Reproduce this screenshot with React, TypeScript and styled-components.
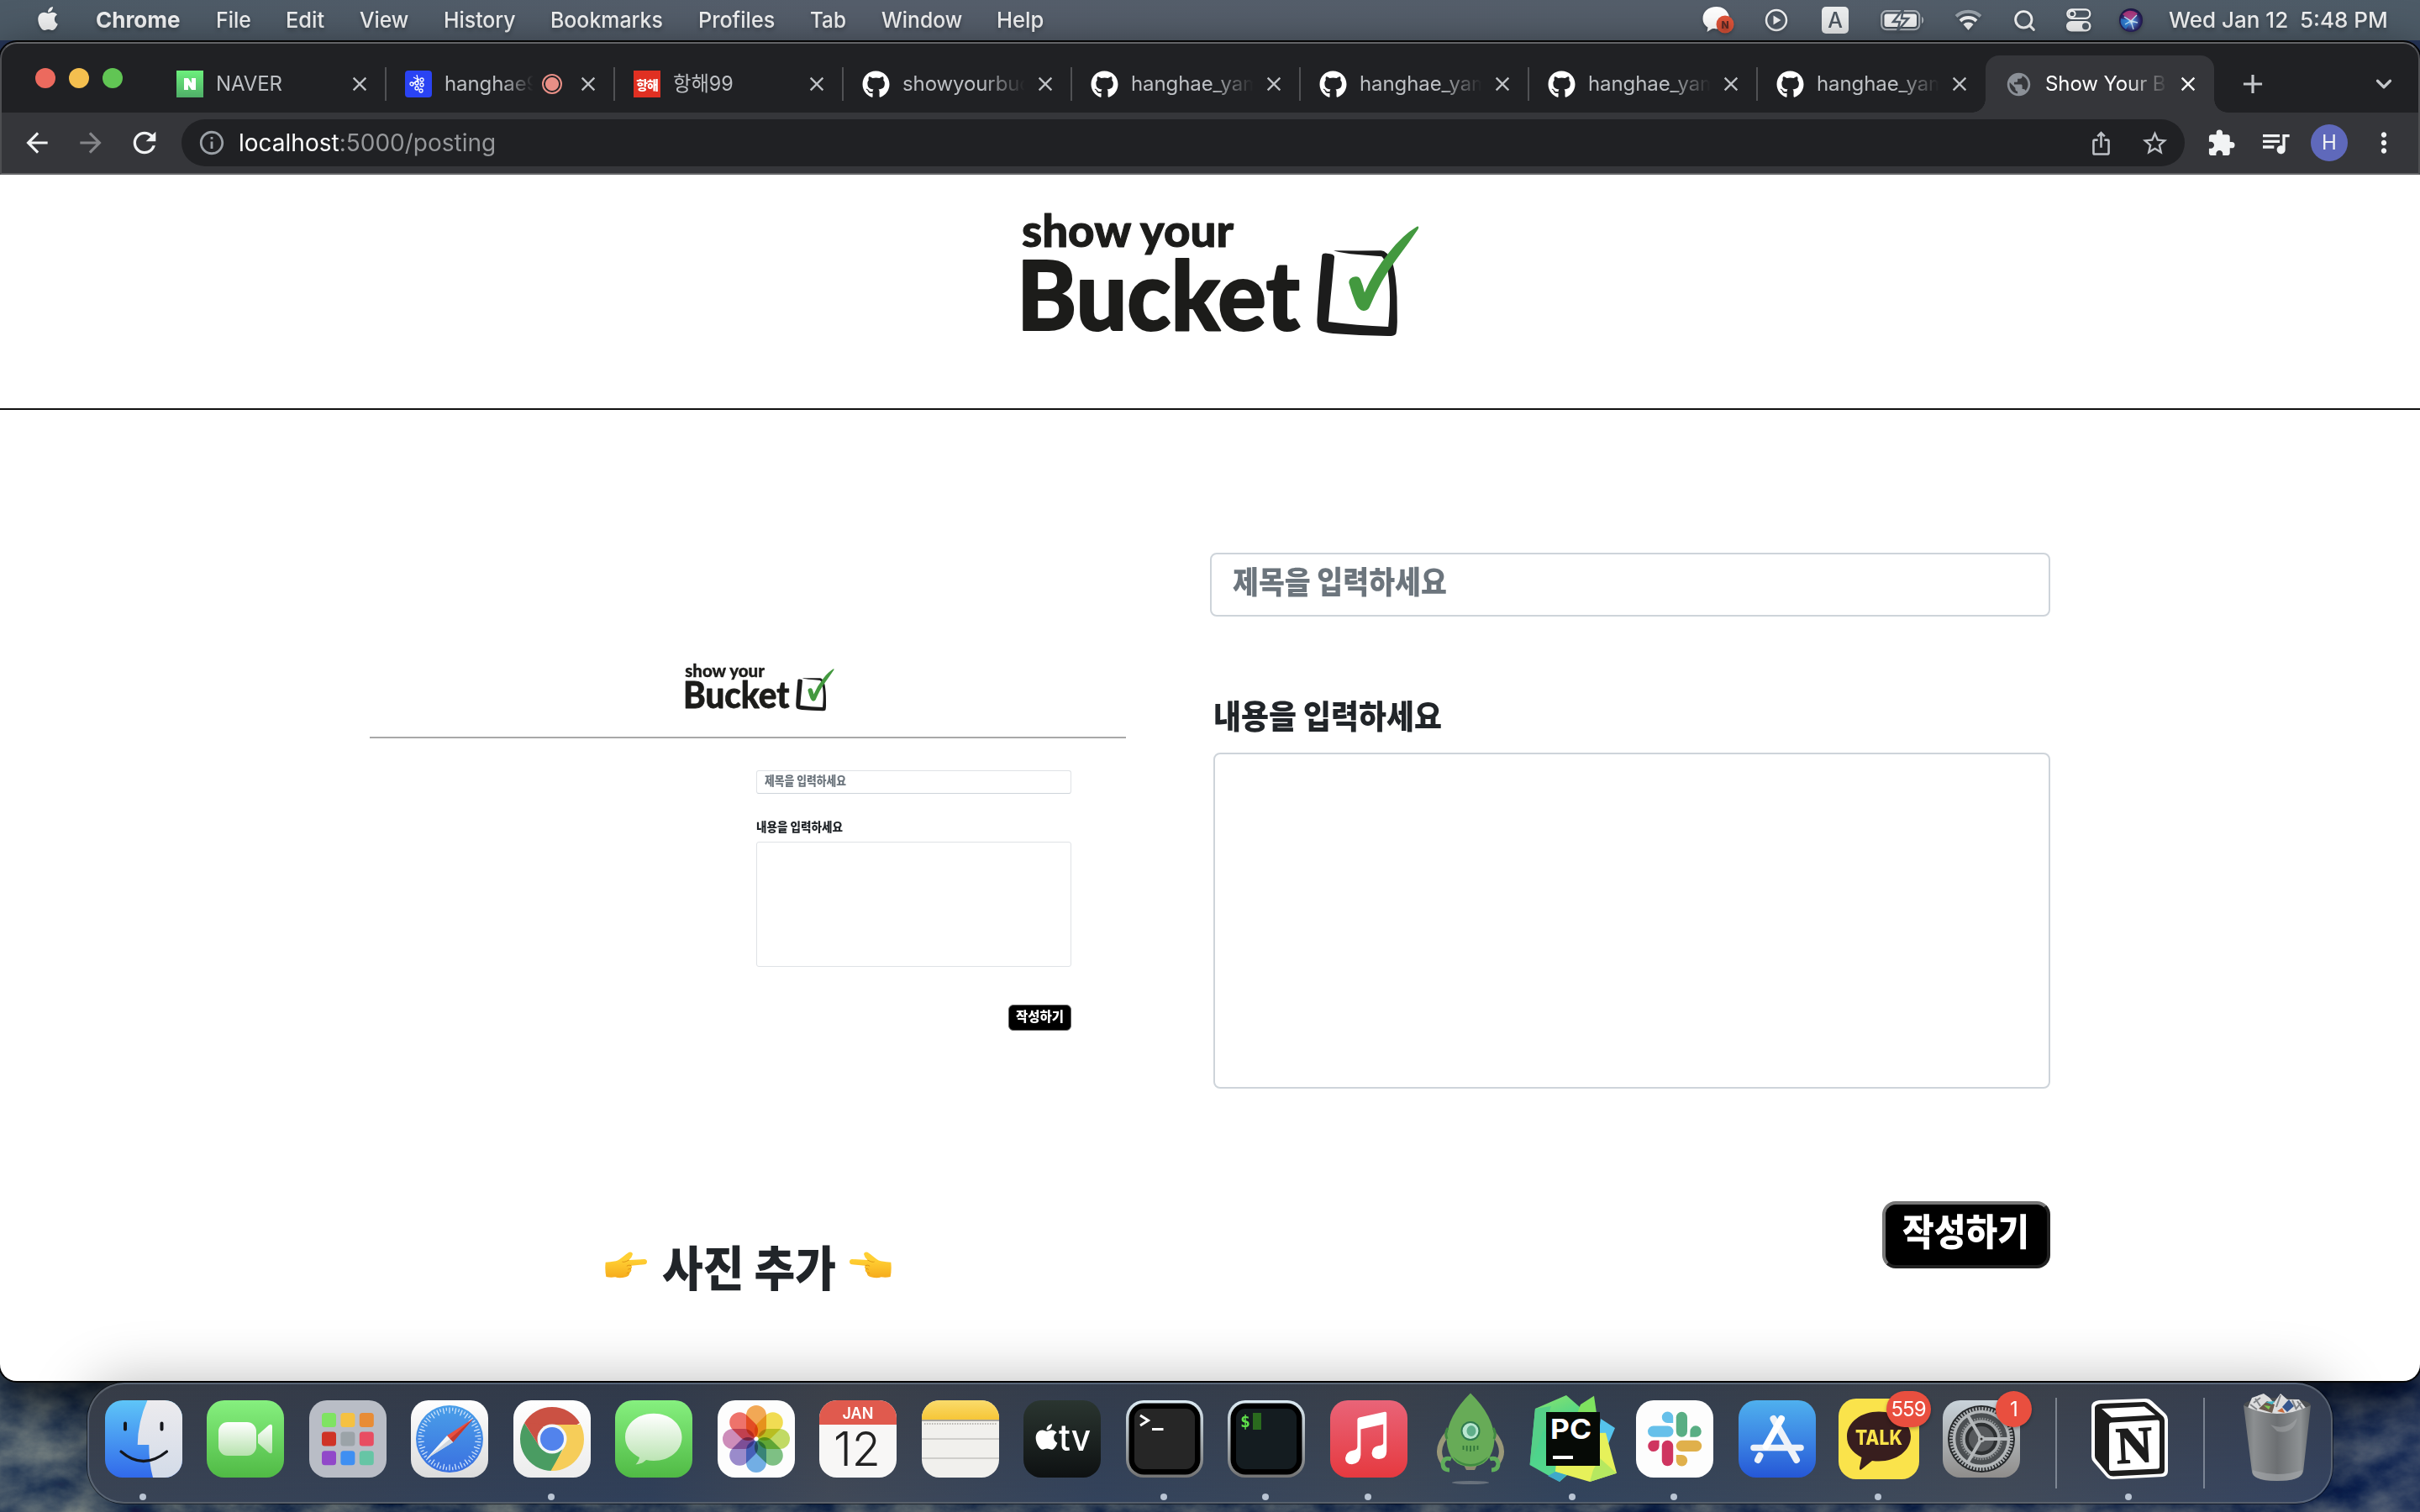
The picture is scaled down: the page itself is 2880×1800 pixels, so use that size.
import React, { useLayoutEffect, useRef, useState } from "react";
import styled, { createGlobalStyle, css } from "styled-components";
import { FaApple, FaGithub } from "react-icons/fa";
import {
  MdAdd,
  MdArrowBack,
  MdArrowForward,
  MdClose,
  MdExtension,
  MdIosShare,
  MdMoreVert,
  MdOutlineInfo,
  MdPublic,
  MdQueueMusic,
  MdRefresh,
  MdStarBorder,
} from "react-icons/md";
import { ChevronDown, Search } from "lucide-react";

const ui = `Inter, Roboto, "Noto Sans CJK KR", sans-serif`;
const korean = `"Noto Sans CJK KR", sans-serif`;

const GlobalStyle = createGlobalStyle`
  * { box-sizing: border-box; }
  body { margin: 0; background: #26365a; overflow: hidden; }
  svg { display: block; flex: none; }
`;

/* ---------- text squeezed or stretched to a set width ---------- */

const FitBox = styled.span<{ $w: number }>`
  display: block;
  flex: none;
  width: ${(p) => p.$w}px;
  white-space: pre;
`;
const FitInner = styled.span`
  display: inline-block;
  transform-origin: 0 50%;
`;

function Fit({ w, children }: { w: number; children: React.ReactNode }) {
  const ref = useRef<HTMLSpanElement>(null);
  const [scale, setScale] = useState(1);
  useLayoutEffect(() => {
    if (ref.current) setScale(w / ref.current.offsetWidth);
  }, [w]);
  return (
    <FitBox $w={w}>
      <FitInner ref={ref} style={{ transform: `scaleX(${scale})` }}>
        {children}
      </FitInner>
    </FitBox>
  );
}

/* ---------- desktop ---------- */

const Desktop = styled.div`
  position: relative;
  width: 2880px;
  height: 1800px;
  overflow: hidden;
  display: flex;
  flex-direction: column;
  font-family: ${ui};
  background: #26365a;
`;
const WallpaperLayer = styled.div`
  position: absolute;
  inset: 0;
`;

function Wallpaper() {
  return (
    <WallpaperLayer>
      <svg width="2880" height="1800">
        <defs>
          <filter id="terrain" x="0" y="0" width="100%" height="100%" colorInterpolationFilters="sRGB">
            <feTurbulence type="fractalNoise" baseFrequency="0.016 0.024" numOctaves="5" seed="11" />
            <feColorMatrix values="0.85 0 0 0 -0.2  0.75 0 0 0 -0.08  0.45 0 0 0 0.16  0 0 0 0 1" />
          </filter>
          <linearGradient id="land" x1="0" x2="1">
            <stop offset="0" stopColor="#5c6a70" stopOpacity="0.4" />
            <stop offset="0.12" stopColor="#5c6a70" stopOpacity="0.1" />
            <stop offset="0.9" stopColor="#1b2b5c" stopOpacity="0.3" />
            <stop offset="1" stopColor="#1b2b5c" stopOpacity="0.45" />
          </linearGradient>
        </defs>
        <rect y="1600" width="2880" height="200" filter="url(#terrain)" />
        <rect y="1600" width="2880" height="200" fill="url(#land)" />
      </svg>
    </WallpaperLayer>
  );
}

/* ---------- menu bar ---------- */

const MenuBar = styled.header`
  position: relative;
  height: 48px;
  flex: none;
  display: flex;
  align-items: center;
  padding: 0 38px 0 41px;
  color: #f1f2f3;
  font-size: 26px;
  font-weight: 500;
  line-height: 48px;
  text-shadow: 0 3px 5px rgba(0, 0, 0, 0.3);
  background: linear-gradient(90deg, #4c5a66, #555e6b 35%, #545e6a 70%, #4d5b67);
  svg { filter: drop-shadow(0 2px 2px rgba(0, 0, 0, 0.25)); }
`;
const AppleSlot = styled.div`
  width: 73px;
  padding-bottom: 4px;
`;
const Menus = styled.nav`
  display: flex;
  gap: 41.700px;
  flex: 1;
  & > :first-child { font-weight: 700; }
`;
const StatusItem = styled.div<{ $w: number }>`
  width: ${(p) => p.$w}px;
  flex: none;
  display: flex;
  justify-content: center;
`;
const InputSource = styled.span`
  width: 32px;
  height: 32px;
  border-radius: 5px;
  background: #eceeef;
  color: #4d5761;
  text-align: center;
  font-size: 25px;
  line-height: 32px;
  text-shadow: none;
`;

const menus: [string, number][] = [
  ["Chrome", 101],
  ["File", 42],
  ["Edit", 46],
  ["View", 58],
  ["History", 86],
  ["Bookmarks", 134],
  ["Profiles", 91],
  ["Tab", 43],
  ["Window", 96],
  ["Help", 56],
];

function SystemBar() {
  return (
    <MenuBar>
      <AppleSlot>
        <FaApple size={32} />
      </AppleSlot>
      <Menus>
        {menus.map(([m, w]) => (
          <Fit key={m} w={w}>{m}</Fit>
        ))}
      </Menus>
      <StatusItem $w={70}>
        <svg width="40" height="34" viewBox="0 0 40 34">
          <path d="M18 1C8 1 1.500 7 1.500 15c0 5 2.500 8.500 6 10.500L6.500 31l6.500-4c2 .6 14 1 16-3 3-4 5-9 3-14C29.500 4 24 1 18 1z" fill="#fff" />
          <circle cx="28" cy="22" r="10.500" fill="#e0543a" />
          <text x="28" y="26.500" fontSize="12" fontWeight="800" textAnchor="middle" fill="#5a2a25">N</text>
        </svg>
      </StatusItem>
      <StatusItem $w={68}>
        <svg width="28" height="28" viewBox="0 0 28 28">
          <circle cx="14" cy="14" r="12" fill="none" stroke="#f1f2f3" strokeWidth="2.500" />
          <path d="M10.500 8.500v11l9-5.500z" fill="#f1f2f3" />
        </svg>
      </StatusItem>
      <StatusItem $w={72}>
        <InputSource>A</InputSource>
      </StatusItem>
      <StatusItem $w={88}>
        <svg width="52" height="28" viewBox="0 0 52 28">
          <rect x="1.200" y="3.200" width="45" height="22" rx="6" fill="none" stroke="#aab1b8" strokeWidth="2.200" />
          <path d="M49 10c3 1 3 7 0 8z" fill="#aab1b8" />
          <rect x="4.500" y="6.500" width="38.500" height="15.500" rx="3" fill="#f1f2f3" />
          <path d="M27 1L15 16h8l-3 11 13-15h-8z" fill="#f1f2f3" stroke="#505c68" strokeWidth="2.500" />
        </svg>
      </StatusItem>
      <StatusItem $w={68}>
        <svg width="33" height="26" viewBox="0 0 33 26">
          <path d="M2 8.500a21 21 0 0 1 29 0" fill="none" stroke="#98a1a9" strokeWidth="4" />
          <path d="M7 14a13.500 13.500 0 0 1 19 0" fill="none" stroke="#f1f2f3" strokeWidth="4" />
          <path d="M10.500 18a8.500 8.500 0 0 1 12 0l-6 7z" fill="#f1f2f3" />
        </svg>
      </StatusItem>
      <StatusItem $w={66}>
        <Search size={29} strokeWidth={2.4} />
      </StatusItem>
      <StatusItem $w={64}>
        <svg width="30" height="28" viewBox="0 0 30 28">
          <rect x="1.300" y="1.300" width="27" height="10.500" rx="5.200" fill="none" stroke="#f1f2f3" strokeWidth="2.200" />
          <circle cx="7" cy="6.500" r="3.600" fill="none" stroke="#f1f2f3" strokeWidth="2" />
          <rect x="0" y="15" width="29.500" height="12.500" rx="6.200" fill="#f1f2f3" />
          <circle cx="23" cy="21.200" r="4" fill="#505c68" />
        </svg>
      </StatusItem>
      <StatusItem $w={60}>
        <svg width="28" height="28" viewBox="0 0 28 28">
          <defs>
            <radialGradient id="siri" cx="0.500" cy="0.550" r="0.600">
              <stop offset="0" stopColor="#e8f6ff" />
              <stop offset="0.250" stopColor="#4a7fd0" />
              <stop offset="0.700" stopColor="#2a2060" />
              <stop offset="1" stopColor="#141230" />
            </radialGradient>
          </defs>
          <circle cx="14" cy="14" r="14" fill="url(#siri)" />
          <path d="M14 15L4 7Q12-1 22 6z" fill="#c43a7d" opacity="0.800" />
          <path d="M14 15L2 12Q0 20 8 25z" fill="#2b8fe6" opacity="0.700" />
          <path d="M6 10l8 5 7-7M14 15l3 10M14 15l-7 4M14 15l8 2" stroke="#d9f5ff" strokeWidth="1.300" fill="none" opacity="0.900" />
        </svg>
      </StatusItem>
      <StatusItem $w={15} />
      <Fit w={261}>{"Wed Jan 12  5:48 PM"}</Fit>
    </MenuBar>
  );
}

/* ---------- browser window ---------- */

const BrowserWindow = styled.section`
  position: relative;
  height: 1594px;
  flex: none;
  border-radius: 20px;
  background: #202124;
  overflow: hidden;
  display: flex;
  flex-direction: column;
`;
const WindowShadow = styled.div`
  position: relative;
  margin-top: 2px;
  border-radius: 20px;
  box-shadow: 0 0 0 2px #060606, 0 20px 60px rgba(0, 0, 0, 0.8);
`;
const BrowserTop = styled.div`
  position: relative;
  flex: none;
  height: 158px;
  &::after {
    content: "";
    position: absolute;
    inset: 0;
    pointer-events: none;
    border: 2px solid #626366;
    border-left-color: #4d4e51;
    border-right-color: #4d4e51;
    border-radius: 20px 20px 0 0;
  }
`;
const TabStrip = styled.div`
  height: 84px;
  display: flex;
  align-items: flex-end;
`;
const Lights = styled.div`
  width: 187px;
  height: 82px;
  padding-left: 42px;
  display: flex;
  align-items: center;
  gap: 16px;
`;
const Light = styled.span<{ $c: string }>`
  width: 24px;
  height: 24px;
  border-radius: 50%;
  background: ${(p) => p.$c};
`;
const TabBox = styled.div<{ $active?: boolean; $line?: boolean }>`
  position: relative;
  width: 272px;
  height: 68px;
  padding: 0 17px 0 23px;
  display: flex;
  align-items: center;
  font-size: 24px;
  color: #bdc0c4;
  ${(p) =>
    p.$line &&
    css`
      &::after {
        content: "";
        position: absolute;
        right: -1px;
        top: 14px;
        width: 2px;
        height: 40px;
        background: #505154;
      }
    `}
  ${(p) =>
    p.$active &&
    css`
      background: #35363a;
      color: #fff;
      border-radius: 16px 16px 0 0;
      &::before, &::after {
        content: "";
        position: absolute;
        bottom: 0;
        width: 16px;
        height: 16px;
      }
      &::before {
        left: -16px;
        background: radial-gradient(circle at 0 0, transparent 15.500px, #35363a 16px);
      }
      &::after {
        right: -16px;
        background: radial-gradient(circle at 100% 0, transparent 15.500px, #35363a 16px);
      }
    `}
`;
const Favicon = styled.span<{ $bg?: string; $r?: number }>`
  width: 32px;
  height: 32px;
  flex: none;
  border-radius: ${(p) => p.$r ?? 0}px;
  background: ${(p) => p.$bg ?? "transparent"};
  color: #fff;
  display: flex;
  align-items: center;
  justify-content: center;
  font-size: 15px;
  font-weight: 900;
  letter-spacing: -1px;
`;
const TabTitle = styled.span<{ $fade?: boolean }>`
  flex: 1;
  min-width: 0;
  margin: 0 10px 0 15px;
  height: 36px;
  line-height: 36px;
  overflow: hidden;
  white-space: nowrap;
  letter-spacing: -0.1px;
  ${(p) => p.$fade && css`mask-image: linear-gradient(90deg, #000 65%, transparent 100%);`}
`;
const Recording = styled.span`
  width: 24px;
  height: 24px;
  flex: none;
  margin-right: 17px;
  border-radius: 50%;
  border: 2px solid #e88f86;
  background: radial-gradient(circle, #e88f86 7.500px, #202124 8.500px);
`;
const StripButton = styled.span<{ $ml: number }>`
  margin-left: ${(p) => p.$ml}px;
  height: 68px;
  display: flex;
  align-items: center;
  color: #c4c7cb;
`;

const gh = <FaGithub size={33} color="#fff" />;
const tabs: { icon: React.ReactNode; title: React.ReactNode; rec?: boolean; fade?: boolean }[] = [
  { icon: <Favicon $bg="linear-gradient(#6cf07c,#4fae68)"><svg width="16" height="16" viewBox="0 0 16 16"><path d="M1 1h5l4 6V1h5v14h-5L6 9v6H1z" fill="#fff" /></svg></Favicon>, title: <Fit w={79}>NAVER</Fit> },
  {
    icon: (
      <Favicon $bg="#2a43f3" $r={4}>
        <svg width="22" height="22" viewBox="0 0 22 22" fill="none" stroke="#fff" strokeWidth="1.300">
          <path d="M5 3l6 3M9 0l2 9M12 5l-8 6" />
          <circle cx="3" cy="11" r="2" /><circle cx="9" cy="10" r="2" /><circle cx="9" cy="16" r="2" />
          <circle cx="15" cy="6" r="2" /><circle cx="15" cy="12" r="2" /><circle cx="14" cy="19" r="2" />
        </svg>
      </Favicon>
    ),
    title: "hanghae99",
    rec: true,
    fade: true,
  },
  { icon: <Favicon $bg="#e03022">항해</Favicon>, title: <Fit w={72}>항해99</Fit> },
  { icon: gh, title: "showyourbucket", fade: true },
  { icon: gh, title: "hanghae_yamm", fade: true },
  { icon: gh, title: "hanghae_yamm", fade: true },
  { icon: gh, title: "hanghae_yamm", fade: true },
  { icon: gh, title: "hanghae_yamm", fade: true },
];

const Toolbar = styled.div`
  height: 74px;
  padding-left: 12px;
  background: #35363a;
  border-bottom: 2px solid #5c5d61;
  display: flex;
  align-items: center;
  color: #f1f3f4;
`;
const NavButton = styled.span<{ $w: number; $dim?: boolean }>`
  width: ${(p) => p.$w}px;
  flex: none;
  display: flex;
  justify-content: center;
  color: ${(p) => (p.$dim ? "#85868a" : "inherit")};
`;
const Omnibox = styled.div`
  width: 2384px;
  height: 56px;
  flex: none;
  margin-left: 12px;
  border-radius: 28px;
  background: #202124;
  display: flex;
  align-items: center;
  font-size: 28px;
  color: #9aa0a6;
  padding-left: 19px;
`;
const Address = styled.div`
  flex: 1;
  padding-left: 15px;
  color: #96989b;
  b { font-weight: 400; color: #fff; }
`;
const Avatar = styled.span`
  width: 44px;
  height: 44px;
  border-radius: 50%;
  background: #5f69bb;
  text-align: center;
  font-size: 24px;
  line-height: 44px;
`;

/* ---------- logo ---------- */

function Logo({ width, height }: { width: number; height: number }) {
  return (
    <svg width={width} height={height} viewBox="30 20 490 170" preserveAspectRatio="none">
      <g fill="#1c1c1a" stroke="#1c1c1a" strokeLinejoin="round" fontFamily="Lato, 'Noto Sans', sans-serif">
        <text x="36" y="74" fontSize="53" fontWeight="900" strokeWidth="1" textLength="252" lengthAdjust="spacingAndGlyphs">show your</text>
        <text x="30" y="173" fontSize="114" fontWeight="900" strokeWidth="2" textLength="337" lengthAdjust="spacingAndGlyphs">Bucket</text>
      </g>
      <g transform="scale(0.34439 0.33333)">
        <path
          d="M1142 252Q1144 243 1160 245Q1184 247 1185 257Q1178 340 1172 400L1164 489Q1260 502 1371 507Q1378 430 1376 380Q1374 330 1366 290Q1356 262 1348 256Q1290 252 1240 247Q1190 240 1182 235Q1270 236 1346 235Q1366 235 1385 275Q1398 320 1401 400L1402 490Q1401 525 1397 533Q1390 541 1370 540Q1270 538 1180 531Q1145 527 1133 518Q1124 506 1125 480Q1130 380 1142 252Z"
          fill="#1c1c1c"
        />
        <path
          d="M1235 350Q1234 337 1248 330Q1268 323 1275 338Q1284 360 1289 385Q1320 310 1375 240Q1420 180 1470 149Q1479 146 1474 158Q1440 210 1400 265Q1345 340 1306 437Q1299 450 1285 450Q1268 447 1259 425Q1244 385 1235 350Z"
          fill="#43993f"
        />
      </g>
    </svg>
  );
}

/* ---------- page ---------- */

const Page = styled.main`
  flex: 1;
  background: #fff;
  font-family: ${korean};
  font-weight: 900;
  color: #212529;
`;
const PageHeader = styled.div`
  height: 280px;
  padding: 32px 0 0 1210px;
  border-bottom: 2px solid #111;
`;
const Columns = styled.div`
  display: grid;
  grid-template-columns: 900px 1000px;
  column-gap: 100px;
  padding-left: 440px;
`;
const PhotoColumn = styled.div`
  padding-top: 272px;
`;
const Preview = styled.div`
  height: 701px;
  color: #212529;
`;
const PreviewHeader = styled.div`
  height: 119px;
  padding: 25px 0 0 373px;
  border-bottom: 2px solid #a8a8a8;
`;
const PreviewForm = styled.div`
  width: 375px;
  margin: 38px 0 0 460px;
  font-size: 14.500px;
  line-height: 20px;
`;
const PreviewInput = styled.div`
  height: 28px;
  border: 1px solid #dfe2e6;
  border-bottom-color: #ced4da;
  border-radius: 3px;
  color: #6c757d;
  padding: 1px 0 0 9px;
`;
const PreviewLabel = styled.div`
  height: 56px;
  padding-top: 29px;
  margin-bottom: 1px;
`;
const PreviewArea = styled.div`
  height: 149px;
  border: 1px solid #dfe2e6;
  border-radius: 3px;
`;
const PreviewButton = styled.div`
  width: 75px;
  height: 31px;
  margin: 45px 0 0 auto;
  background: #000;
  border: 1px solid #666;
  border-radius: 6px;
  color: #fff;
  font-size: 16px;
  padding: 2px 0 0 8px;
`;
const Caption = styled.div`
  height: 90px;
  display: flex;
  align-items: center;
  padding-left: 280px;
  font-size: 57px;
  line-height: 84px;
`;
const CaptionText = styled.div`
  margin: 0 16px 0 18px;
`;
const FormColumn = styled.div`
  padding-top: 170px;
  display: flex;
  flex-direction: column;
`;
const TitleInput = styled.div`
  height: 76px;
  border: 2px solid #ced4da;
  border-radius: 8px;
  padding: 1px 0 0 25px;
  font-size: 37px;
  line-height: 60px;
  color: #6c757d;
`;
const Label = styled.label`
  height: 162px;
  padding: 86px 0 0 4px;
  font-size: 39px;
  line-height: 60px;
`;
const ContentArea = styled.div`
  height: 400px;
  margin-left: 4px;
  border: 2px solid #ced4da;
  border-radius: 8px;
`;
const SubmitButton = styled.button`
  width: 200px;
  height: 80px;
  margin: 134px 0 0 auto;
  padding: 0 0 13px 20px;
  display: flex;
  align-items: center;
  background: #000;
  color: #fff;
  border: 4px solid;
  border-color: #767676 #212121 #212121 #767676;
  border-radius: 16px;
  font: 900 44px/60px ${korean};
`;

function PointingHand({ flip }: { flip?: boolean }) {
  return (
    <svg width="50" height="32" viewBox="0 0 147 96" preserveAspectRatio="none">
      <defs>
        <linearGradient id="skin" x1="0" y1="0" x2="0" y2="1">
          <stop offset="0.300" stopColor="#ffcf33" />
          <stop offset="1" stopColor="#f6ab1c" />
        </linearGradient>
      </defs>
      <g transform={flip ? "matrix(-1 0 0 1 147 0)" : undefined}>
        <path d="M2 38C12 38 24 36 38 34C56 28 70 10 84 2Q96-1 97 9Q95 20 84 30L138 27Q147 28 147 36Q147 45 138 46L92 50Q97 56 91 62Q95 70 86 76Q86 88 72 91Q50 97 36 91Q20 94 4 90Q-1 64 2 38Z" fill="url(#skin)" />
        <path d="M84 30Q66 40 60 36M92 50Q82 46 76 52M91 62Q84 60 80 64M86 76Q80 74 76 78" fill="none" stroke="#d98a10" strokeWidth="2.500" />
      </g>
    </svg>
  );
}

function PostingPage() {
  return (
    <Page>
      <PageHeader>
        <Logo width={490} height={170} />
      </PageHeader>
      <Columns>
        <PhotoColumn>
          <Preview>
            <PreviewHeader>
              <Logo width={184} height={65} />
            </PreviewHeader>
            <PreviewForm>
              <PreviewInput><Fit w={97}>제목을 입력하세요</Fit></PreviewInput>
              <PreviewLabel><Fit w={103}>내용을 입력하세요</Fit></PreviewLabel>
              <PreviewArea />
              <PreviewButton><Fit w={57}>작성하기</Fit></PreviewButton>
            </PreviewForm>
          </Preview>
          <Caption>
            <PointingHand />
            <CaptionText><Fit w={207}>사진 추가</Fit></CaptionText>
            <PointingHand flip />
          </Caption>
        </PhotoColumn>
        <FormColumn>
          <TitleInput><Fit w={255}>제목을 입력하세요</Fit></TitleInput>
          <Label><Fit w={272}>내용을 입력하세요</Fit></Label>
          <ContentArea />
          <SubmitButton><Fit w={151}>작성하기</Fit></SubmitButton>
        </FormColumn>
      </Columns>
    </Page>
  );
}

/* ---------- dock ---------- */

const DockArea = styled.footer`
  position: relative;
  flex: none;
  height: 154px;
  padding: 0 104px;
  margin-top: 2px;
`;
const DockBar = styled.div`
  height: 144px;
  border-radius: 44px;
  border: 2px solid rgba(160, 170, 180, 0.32);
  padding: 0 4px;
  display: flex;
  background: linear-gradient(180deg, rgba(50, 52, 58, 0.5), rgba(50, 66, 92, 0.2)),
    linear-gradient(90deg, #3b4453, #2f3f59 25%, #444b57 33%, #33435c 45%, #3f4a59 58%, #32445d 66%, #454d59 85%, #354462);
  box-shadow: 0 0 0 1px rgba(0, 0, 0, 0.5), 0 0 70px rgba(0, 0, 0, 0.28);
`;
const Slot = styled.div<{ $w?: number }>`
  position: relative;
  width: ${(p) => p.$w ?? 121.500}px;
  flex: none;
  display: flex;
  justify-content: center;
  margin-top: -2px;
  svg { overflow: visible; }
`;
const Dot = styled.i`
  position: absolute;
  top: 132px;
  left: calc(50% - 5px);
  width: 8px;
  height: 8px;
  border-radius: 50%;
  background: #b9c4d3;
`;
const DockDivider = styled.div<{ $l: number; $r: number }>`
  width: 2px;
  height: 108px;
  margin: 16px ${(p) => p.$r}px 0 ${(p) => p.$l}px;
  background: rgba(190, 198, 208, 0.5);
`;
const Badge = styled.span<{ $l: number; $w: number }>`
  position: absolute;
  top: 10px;
  left: ${(p) => p.$l}px;
  width: ${(p) => p.$w}px;
  height: 43px;
  border-radius: 22px;
  background: #e94f3f;
  color: #fff;
  font-size: 24px;
  line-height: 43px;
  text-align: center;
  letter-spacing: -1px;
  box-shadow: 0 2px 4px rgba(0, 0, 0, 0.3);
`;

function Grad({ id, a, b, mid }: { id: string; a: string; b: string; mid?: string }) {
  return (
    <linearGradient id={id} x1="0" y1="0" x2="0" y2="1">
      <stop offset="0" stopColor={a} />
      {mid && <stop offset="0.500" stopColor={mid} />}
      <stop offset="1" stopColor={b} />
    </linearGradient>
  );
}
function Tile({ fill }: { fill: string }) {
  return <rect x="14" y="21" width="92" height="92" rx="21" fill={fill} />;
}
function Art({ children }: { children: React.ReactNode }) {
  return <svg width="120" height="130" viewBox="0 0 120 130">{children}</svg>;
}
const ring = (n: number) => Array.from({ length: n }, (_, i) => (i * 360) / n);

const Finder = () => (
  <Art>
    <defs>
      <Grad id="fb" a="#5ec5f8" b="#3169ea" />
      <Grad id="fw" a="#ecebee" b="#d3dbe8" />
      <clipPath id="fc"><rect x="14" y="21" width="92" height="92" rx="21" /></clipPath>
    </defs>
    <g clipPath="url(#fc)">
      <rect x="14" y="21" width="92" height="92" fill="url(#fb)" />
      <path d="M64.400 21Q53 47 52.700 74H66.300Q66 95 71 113H106V21z" fill="url(#fw)" />
    </g>
    <path d="M38 48.500v7M81.500 48.500v7" stroke="#15171c" strokeWidth="4" strokeLinecap="round" />
    <path d="M33 82Q59.500 105 87.500 82" fill="none" stroke="#15171c" strokeWidth="3.200" strokeLinecap="round" />
  </Art>
);
const FaceTime = () => (
  <Art>
    <defs><Grad id="fg" a="#86f07f" b="#50ba45" /><Grad id="cam" a="#ffffff" b="#b7e2ae" /></defs>
    <Tile fill="url(#fg)" />
    <rect x="28" y="47" width="45" height="40" rx="11" fill="url(#cam)" />
    <path d="M75 62L88 50.500Q92 48 92 53V81Q92 86 88 83.500L75 72z" fill="url(#cam)" />
  </Art>
);
const pads = ["#7fe362", "#f5c142", "#e88c35", "#cf3326", "#9ba3a8", "#e84d62", "#9148c9", "#3f8ff2", "#66c5a5"];
const Launchpad = () => (
  <Art>
    <Tile fill="#b9bdc6" />
    {pads.map((c, i) => (
      <rect key={c} x={29 + (i % 3) * 22.400} y={36 + Math.floor(i / 3) * 22.600} width="17" height="17" rx="3.500" fill={c} />
    ))}
  </Art>
);
const Safari = () => (
  <Art>
    <defs><Grad id="sf" a="#ffffff" b="#dcdcdc" /><Grad id="sb" a="#4a9fe8" b="#3a70e0" /></defs>
    <Tile fill="url(#sf)" />
    <circle cx="60" cy="67" r="40" fill="url(#sb)" />
    {ring(60).map((a, i) => (
      <path key={a} d={`M60 29.500v${i % 2 ? 4 : 7}`} stroke="#d7e8fb" strokeWidth="1.200" transform={`rotate(${a} 60 67)`} />
    ))}
    <path d="M88 43L64 71 57 63z" fill="#e8503f" />
    <path d="M88 43L64 71 60.500 67z" fill="#c23a30" />
    <path d="M32.500 90.500L57 63 64 71z" fill="#f4f6f8" />
    <path d="M32.500 90.500L60.500 67 64 71z" fill="#cfd6de" />
  </Art>
);
const ChromeIcon = () => (
  <Art>
    <defs><Grad id="cw" a="#ffffff" b="#ececec" /></defs>
    <Tile fill="url(#cw)" />
    <path d="M60 67L27.090 48A38 38 0 0 1 92.910 48z" fill="#cb5143" />
    <path d="M27.090 48A38 38 0 0 0 60 105L74 76 60 67 45 76z" fill="#4a9c62" />
    <path d="M92.910 48A38 38 0 0 1 58.500 105L75.500 75 60 67V50H92.910z" fill="#f6cd59" />
    <path d="M27.090 48L45 76 60 67 60 50z" fill="#cb5143" />
    <circle cx="60" cy="67" r="17.500" fill="#f4f6f8" />
    <circle cx="60" cy="67" r="14" fill="#5283ec" />
  </Art>
);
const Messages = () => (
  <Art>
    <Tile fill="url(#fg)" />
    <path d="M60 36.700C79 36.700 93.500 49 93.500 65S79 93 60 93Q55 93 51 92Q46 97 38.500 97.500Q42.500 93 43 89Q26 80 26 65C26 49 41 36.700 60 36.700z" fill="url(#cam)" />
  </Art>
);
const petals = ["#f29a38", "#f1d935", "#b9d64b", "#68b86f", "#5aa2e2", "#8a78c4", "#c77ab0", "#ee5b52"];
const Petal = styled.rect`
  mix-blend-mode: multiply;
`;
const Photos = () => (
  <Art>
    <Tile fill="#fdfdfd" />
    {petals.map((c, i) => (
      <Petal key={c} x="48" y="27" width="24" height="38" rx="12" fill={c} opacity="0.850" transform={`rotate(${i * 45} 60 67)`} />
    ))}
    <circle cx="60" cy="67" r="2.500" fill="#fff" />
  </Art>
);
const Calendar = () => (
  <Art>
    <defs><clipPath id="ct"><rect x="14" y="21" width="92" height="92" rx="21" /></clipPath></defs>
    <g clipPath="url(#ct)">
      <rect x="14" y="21" width="92" height="92" fill="#f8f7f6" />
      <rect x="14" y="21" width="92" height="29" fill="#e05a4e" />
    </g>
    <text x="60" y="43" fontSize="18.500" fontWeight="600" fill="#fff" textAnchor="middle" textLength="37" lengthAdjust="spacingAndGlyphs">JAN</text>
    <text x="59" y="98.500" fontSize="56" fontWeight="300" fill="#222" textAnchor="middle" textLength="56" lengthAdjust="spacingAndGlyphs">12</text>
  </Art>
);
const Notes = () => (
  <Art>
    <defs><Grad id="ny" a="#fadb6c" b="#f6c637" /></defs>
    <g clipPath="url(#ct)">
      <rect x="14" y="21" width="92" height="92" fill="#f1f0ed" />
      <rect x="14" y="21" width="92" height="23" fill="url(#ny)" />
      <rect x="14" y="44" width="92" height="2" fill="#a9a59c" />
      <path d="M17 49h87" stroke="#b9b7b2" strokeWidth="2" strokeDasharray="1.500 1.500" />
      <path d="M14 67h92M14 90h92" stroke="#cfcecb" strokeWidth="2" />
    </g>
  </Art>
);
const AppleTv = () => (
  <Art>
    <defs><Grad id="tv" a="#2a3530" b="#0e1112" /></defs>
    <Tile fill="url(#tv)" />
    <FaApple x={24} y={47} size={35} color="#fff" />
    <text x="56" y="81" fontSize="43" fontWeight="500" fill="#fff" textLength="38" lengthAdjust="spacingAndGlyphs">tv</text>
  </Art>
);
const TermFrame = ({ fill }: { fill: string }) => (
  <>
    <defs><Grad id="tf" a="#dcebf4" b="#737373" /></defs>
    <Tile fill="url(#tf)" />
    <rect x="17.500" y="24.500" width="85" height="85" rx="18" fill="#000" />
    <rect x="24" y="31" width="72" height="72" rx="11" fill={fill} />
  </>
);
const Terminal = () => (
  <Art>
    <TermFrame fill="#262626" />
    <path d="M31 39l9.500 6L31 51M45 55.500h13.500" fill="none" stroke="#fff" strokeWidth="3" />
  </Art>
);
const ITerm = () => (
  <Art>
    <TermFrame fill="#141c20" />
    <text x="29" y="53" fontSize="20" fontWeight="600" fill="#5fe04a" fontFamily="'DejaVu Sans Mono', monospace">$</text>
    <rect x="44" y="36" width="10" height="20" fill="#2a6a1e" />
  </Art>
);
const Music = () => (
  <Art>
    <defs><Grad id="mu" a="#e96478" b="#e6393f" /></defs>
    <Tile fill="url(#mu)" />
    <path d="M46.400 44Q46.400 42 48.500 41.400L79 34.800Q81.200 34.500 81.200 36.500V82Q81 90.500 72 91Q64 91 63.500 84Q64 76 72 75Q77 74.500 77.200 72V49.500L50.400 55.500V86Q50 96 40 97.200Q32 97 32 90Q33 82 41 80.800Q46.400 80 46.400 76z" fill="#fff" />
  </Art>
);
const Robot = () => (
  <Art>
    <path d="M33 60Q16 80 28 96M87 60Q104 80 92 96" fill="none" stroke="#9a9878" strokeWidth="6" />
    <path d="M52 98h16l-3 6h-10z" fill="#8d8a70" />
    <path d="M60 12.500Q88 40 88.600 68Q86 100 60 100Q34 100 31.500 68Q32 40 60 12.500z" fill="#67ab57" />
    <path d="M39 88Q60 106 81 88Q75 99 60 99.500Q45 99 39 88z" fill="#3f8a41" />
    <path d="M33 54q-4 6-1 13M87 54q4 6 1 13" stroke="#3f8a41" strokeWidth="3" fill="none" />
    <circle cx="60" cy="57.500" r="11.500" fill="#2f7a4f" />
    <circle cx="60" cy="57.500" r="9.500" fill="#b9e6d0" />
    <ellipse cx="61" cy="57.500" rx="5.500" ry="6.500" fill="#5fae8a" />
    <path d="M51.500 75v5M55.700 75v6.500M60 75v7M64.300 75v6.500M68.500 75v5" stroke="#31753a" strokeWidth="1.800" />
    <path d="M37 91q-8-3-10 5q0 8 8 8M83 91q8-3 10 5q0 8-8 8" fill="none" stroke="#5fae5b" strokeWidth="5" />
    <ellipse cx="60" cy="119" rx="22" ry="2" fill="#7d858c" opacity="0.700" />
  </Art>
);
const PyCharm = () => (
  <Art>
    <defs>
      <linearGradient id="pg" x1="0" y1="0" x2="0.300" y2="1"><stop offset="0" stopColor="#8ee66a" /><stop offset="0.450" stopColor="#48d18c" /><stop offset="1" stopColor="#58d98c" /></linearGradient>
    </defs>
    <path d="M15 31L52 15 92 50 60 104 44 118 8.600 98z" fill="url(#pg)" />
    <path d="M15 31L34 28 20 70 8.600 98z" fill="#55cf88" />
    <path d="M69 26L85 15.700 90 50H60z" fill="#7fe35f" />
    <path d="M93 43L110 54 99 80H88z" fill="#55c3ec" />
    <path d="M99 59.700L112 107.700 80 118 39 106 40 95 90 60z" fill="#e6f15a" />
    <path d="M112 107.700L80 118 84 104 92 90z" fill="#b6e860" />
    <path d="M44 118L52 110 39 106 30 111z" fill="#3fa9c9" />
    <rect x="28" y="35" width="64" height="64" fill="#060a06" />
    <text x="33" y="67" fontSize="32" fontWeight="700" fill="#fff" textLength="49" lengthAdjust="spacingAndGlyphs">PC</text>
    <rect x="36" y="87" width="24" height="4" fill="#fff" />
  </Art>
);
const Slack = () => (
  <Art>
    <Tile fill="#fdfdfd" />
    <g fill="#66c0ea"><rect x="28" y="51.500" width="30.500" height="13.200" rx="6.600" /><path d="M58.200 48V41.300a6.700 6.700 0 1 0-6.700 6.700z" /></g>
    <g fill="#59ae84"><rect x="61.800" y="34.700" width="13.200" height="30" rx="6.600" /><path d="M78.400 64.700V58.200a6.700 6.700 0 1 1 6.700 6.500z" /></g>
    <g fill="#cf3560"><rect x="44.800" y="68.700" width="13.400" height="30.500" rx="6.600" /><path d="M41.600 68.700V75.300a6.700 6.700 0 1 1-6.700-6.600z" /></g>
    <g fill="#e0b04b"><rect x="61.800" y="68.700" width="30.400" height="13.200" rx="6.600" /><path d="M61.800 86V92.700a6.700 6.700 0 1 0 6.700-6.700z" /></g>
  </Art>
);
const AppStore = () => (
  <Art>
    <defs><Grad id="as" a="#4fb0ee" b="#2557d6" mid="#3c86e4" /></defs>
    <Tile fill="url(#as)" />
    <g strokeLinecap="round" strokeWidth="8" stroke="#eef2f8">
      <path d="M55.500 43L83 92" />
      <path d="M32 77.500H88" strokeWidth="7.500" />
      <path d="M65 43L46.500 76" stroke="#fff" />
      <path d="M39.500 87L37 92" />
    </g>
  </Art>
);
const Talk = () => (
  <Art>
    <rect x="12" y="19" width="96" height="96" rx="21" fill="#fae34b" />
    <path d="M60 34.500C81 34.500 98 47 98 64S81 93.500 60 93.500Q56 93.500 52 93L39 103.500Q36.500 105 37 101L39.500 89Q22 80 22 64C22 47 39 34.500 60 34.500z" fill="#381e1e" />
    <text x="60" y="74" fontSize="24" fontWeight="800" fill="#fae34b" textAnchor="middle" textLength="56" lengthAdjust="spacingAndGlyphs">TALK</text>
  </Art>
);
const Settings = () => (
  <Art>
    <defs><Grad id="se" a="#c9d3da" b="#8f8d8b" /></defs>
    <Tile fill="url(#se)" />
    <circle cx="60" cy="67" r="40" fill="#25282a" />
    <circle cx="60" cy="67" r="36" fill="none" stroke="#a9adb0" strokeWidth="4" strokeDasharray="2.200 1.570" />
    <circle cx="60" cy="67" r="32.500" fill="#4b4f52" stroke="#b4b8ba" strokeWidth="3.500" />
    <circle cx="60" cy="67" r="21" fill="#2c2f31" stroke="#a3a7a9" strokeWidth="3.500" />
    <circle cx="60" cy="67" r="24" fill="none" stroke="#8d9193" strokeWidth="2.500" strokeDasharray="1.600 1.540" />
    <circle cx="60" cy="67" r="15" fill="#56595c" />
    {[0, 120, 240].map((a) => (
      <path key={a} d="M60 67H92" stroke="#b4b8ba" strokeWidth="4" transform={`rotate(${a} 60 67)`} />
    ))}
    <circle cx="60" cy="67" r="4" fill="#b4b8ba" />
    <circle cx="60" cy="67" r="1.500" fill="#333" />
  </Art>
);
const Notion = () => (
  <Art>
    <path d="M24 21L80 19Q84 19 87 22L103 37Q106 40 106 44V105Q106 111 100 112L40 115Q35 115 32 111L18 95Q15 92 15 88V29Q15 22 24 21z" fill="#fff" />
    <path d="M26 25L78 23Q81 23 84 26L100 40Q102 42 102 45V104Q102 108 98 108.500L41 111.500Q37 111.500 35 109L21 92Q19 90 19 87V30Q19 26 26 25z" fill="#1d1d1d" />
    <path d="M27 31L78 28.500 91 38.500 39 41.500z" fill="#fff" />
    <path d="M39 47.500L94 44.500Q96 44.500 96 47V100Q96 102 94 102.500L38 105Q36 105 36 102.500V50.500Q36 47.500 39 47.500z" fill="#fff" />
    <text x="66" y="95" fontSize="61" fontWeight="700" fill="#1d1d1d" stroke="#1d1d1d" strokeWidth="1.500" textAnchor="middle" textLength="43" lengthAdjust="spacingAndGlyphs" fontFamily="'Liberation Serif', serif" transform="rotate(-3 66 75)">N</text>
  </Art>
);
const Trash = () => (
  <Art>
    <defs>
      <linearGradient id="tr" x1="0" x2="1"><stop offset="0" stopColor="#6d7174" /><stop offset="0.150" stopColor="#8c8f91" /><stop offset="0.500" stopColor="#6c6f72" /><stop offset="0.850" stopColor="#8e9294" /><stop offset="1" stopColor="#63676a" /></linearGradient>
    </defs>
    <ellipse cx="60" cy="27" rx="40" ry="9" fill="#4a4d50" />
    <path d="M25 30L30 18 44 13 51 18 56 24 64 13 72 20 86 20 94 30 84 36 60 38 36 36z" fill="#dcddde" />
    <path d="M38 31L48 22 57 26 54 36z" fill="#6a5b4e" /><path d="M46 23l11-1-3 4z" fill="#3fb8c8" /><path d="M44 27l8 1-2 4z" fill="#7ec850" />
    <path d="M66 29L74 20 80 28 72 35z" fill="#35558c" /><path d="M60 34l6-4 3 6z" fill="#c96a3b" />
    <path d="M28 26l8 6M34 19l6 9M84 22l6 9M64 15l-5 14M78 21l5 11M88 24l-6 8M40 18l-8 6" stroke="#808387" strokeWidth="2" />
    <path d="M20 27Q40 37 60 37T100 27L91 106Q88 117 60 117T30 106z" fill="url(#tr)" />
    <path d="M52 50Q70 58 84 42Q80 62 60 58z" fill="#a7aaac" opacity="0.500" />
    <path d="M31 104Q60 114 90 104L89.500 108Q86 117 60 117T30.500 108z" fill="#a5a9ab" opacity="0.600" />
  </Art>
);

const apps: { name: string; Icon: () => React.ReactElement; on?: boolean; badge?: [string, number, number] }[] = [
  { name: "finder", Icon: Finder, on: true },
  { name: "facetime", Icon: FaceTime },
  { name: "launchpad", Icon: Launchpad },
  { name: "safari", Icon: Safari },
  { name: "chrome", Icon: ChromeIcon, on: true },
  { name: "messages", Icon: Messages },
  { name: "photos", Icon: Photos },
  { name: "calendar", Icon: Calendar },
  { name: "notes", Icon: Notes },
  { name: "tv", Icon: AppleTv },
  { name: "terminal", Icon: Terminal, on: true },
  { name: "iterm", Icon: ITerm, on: true },
  { name: "music", Icon: Music, on: true },
  { name: "robot", Icon: Robot },
  { name: "pycharm", Icon: PyCharm, on: true },
  { name: "slack", Icon: Slack, on: true },
  { name: "appstore", Icon: AppStore },
  { name: "talk", Icon: Talk, on: true, badge: ["559", 69, 53] },
  { name: "settings", Icon: Settings, badge: ["1", 78, 43] },
];

function Dock() {
  return (
    <DockArea>
      <DockBar>
        {apps.map(({ name, Icon, on, badge }) => (
          <Slot key={name}>
            <Icon />
            {badge && <Badge $l={badge[1]} $w={badge[2]}>{badge[0]}</Badge>}
            {on && <Dot />}
          </Slot>
        ))}
        <DockDivider $l={27} $r={26} />
        <Slot $w={120}>
          <Notion />
          <Dot />
        </Slot>
        <DockDivider $l={28} $r={26} />
        <Slot $w={120}>
          <Trash />
        </Slot>
      </DockBar>
    </DockArea>
  );
}

export default function App() {
  return (
    <Desktop>
      <GlobalStyle />
      <Wallpaper />
      <SystemBar />
      <WindowShadow>
        <BrowserWindow>
          <BrowserTop>
            <TabStrip>
              <Lights>
                <Light $c="#ec6a5e" />
                <Light $c="#f4bf4f" />
                <Light $c="#61c554" />
              </Lights>
              {tabs.map((t, i) => (
                <TabBox key={i} $line={i < 7}>
                  {t.icon}
                  <TabTitle $fade={t.fade}>{t.title}</TabTitle>
                  {t.rec && <Recording />}
                  <MdClose size={28} />
                </TabBox>
              ))}
              <TabBox $active>
                <MdPublic size={33} color="#8b9097" />
                <TabTitle $fade>Show Your Bucket</TabTitle>
                <MdClose size={28} />
              </TabBox>
              <StripButton $ml={27}><MdAdd size={38} /></StripButton>
              <StripButton $ml={122}><ChevronDown size={30} strokeWidth={2.6} /></StripButton>
            </TabStrip>
            <Toolbar>
              <NavButton $w={64}><MdArrowBack size={38} /></NavButton>
              <NavButton $w={64} $dim><MdArrowForward size={38} /></NavButton>
              <NavButton $w={64}><MdRefresh size={40} /></NavButton>
              <Omnibox>
                <MdOutlineInfo size={34} />
                <Address><Fit w={306}><b>localhost</b>:5000/posting</Fit></Address>
                <NavButton $w={56}><MdIosShare size={31} color="#bdc1c6" /></NavButton>
                <NavButton $w={72}><MdStarBorder size={35} color="#bdc1c6" /></NavButton>
              </Omnibox>
              <NavButton $w={86}><MdExtension size={35} /></NavButton>
              <NavButton $w={43}><MdQueueMusic size={40} /></NavButton>
              <NavButton $w={86}><Avatar>H</Avatar></NavButton>
              <NavButton $w={43}><MdMoreVert size={38} /></NavButton>
            </Toolbar>
          </BrowserTop>
          <PostingPage />
        </BrowserWindow>
      </WindowShadow>
      <Dock />
    </Desktop>
  );
}
